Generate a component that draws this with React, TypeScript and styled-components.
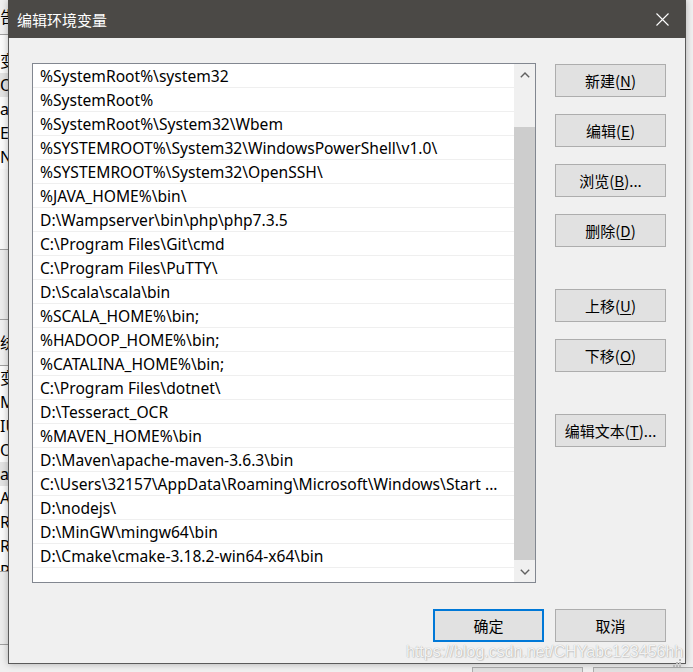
import React from "react";
import styled, { createGlobalStyle } from "styled-components";

const UI_FONT = `"Noto Sans", "Noto Sans CJK SC", sans-serif`;
const CJK_FONT = `"Noto Sans CJK SC", "Noto Sans", sans-serif`;

const GlobalStyle = createGlobalStyle`
  html, body { margin: 0; padding: 0; }
  body {
    background: #f0f0f0;
    font-family: ${UI_FONT};
    overflow: hidden;
  }
`;

/* ---------- desktop & background window ---------- */

const Desktop = styled.div`
  position: relative;
  width: 693px;
  height: 672px;
  overflow: hidden;
  background: #f0f0f0;
  display: flex;
`;

const BackStrip = styled.div<{ $w: number }>`
  width: ${(p) => p.$w}px;
  flex: none;
  height: 100%;
  display: flex;
  flex-direction: column;
  overflow: hidden;
`;

const BackCenter = styled.div`
  flex: 1;
  display: flex;
  flex-direction: column;
  justify-content: flex-end;
`;

const Seg = styled.div<{ $h?: number; $bg?: string; $line?: boolean; $shift?: number; $lh?: number }>`
  flex: ${(p) => (p.$h ? "none" : "1")};
  height: ${(p) => (p.$h ? `${p.$h}px` : "auto")};
  box-sizing: border-box;
  background: ${(p) => p.$bg ?? "#ffffff"};
  border-bottom: ${(p) => (p.$line ? "1px solid #a0a0a0" : "none")};
  font-family: ${UI_FONT};
  font-size: 16px;
  line-height: ${(p) => p.$lh ?? p.$h ?? 24}px;
  color: #000;
  white-space: nowrap;
  overflow: hidden;
  padding-left: ${(p) => p.$shift ?? 0}px;
`;

const BackButtons = styled.div`
  height: 5px;
  display: flex;
  gap: 10px;
  padding-left: 464px;
`;

const BackButton = styled.div<{ $w: number }>`
  width: ${(p) => p.$w}px;
  height: 8px;
  box-sizing: border-box;
  border: 1px solid #adadad;
  background: #e1e1e1;
`;

/* ---------- dialog ---------- */

const Dialog = styled.div`
  position: absolute;
  left: 8px;
  top: 0;
  width: 678px;
  height: 664px;
  box-sizing: border-box;
  border: 1px solid #5a5a5a;
  border-top: none;
  background: #f0f0f0;
  display: flex;
  flex-direction: column;
  box-shadow: 0 0 7px rgba(0, 0, 0, 0.28);
`;

const TitleBar = styled.div`
  height: 38px;
  flex: none;
  background: #4b4946;
  display: flex;
  align-items: center;
  justify-content: space-between;
  padding-left: 9px;
  margin: 0 -1px;
`;

const Title = styled.div`
  font-family: ${CJK_FONT};
  font-size: 15px;
  color: #ffffff;
  line-height: 38px;
  padding-top: 1px;
`;

const CloseButton = styled.div`
  width: 47px;
  height: 38px;
  display: flex;
  align-items: center;
  justify-content: center;
`;

const Body = styled.div`
  flex: 1;
  display: flex;
  flex-direction: column;
  padding: 25px 19px 21px 23px;
`;

const Main = styled.div`
  display: flex;
  gap: 19px;
`;

const ListBox = styled.div`
  width: 504px;
  height: 520px;
  box-sizing: border-box;
  border: 1px solid #828790;
  background: #ffffff;
  display: flex;
`;

const Rows = styled.div`
  flex: 1;
  display: flex;
  flex-direction: column;
  overflow: hidden;
`;

const Row = styled.div`
  height: 24px;
  flex: none;
  box-sizing: border-box;
  border-bottom: 1px solid #efefef;
  padding: 2px 0 0 7px;
  font-family: ${UI_FONT};
  font-size: 15.6px;
  line-height: 21px;
  color: #000;
  white-space: nowrap;
  overflow: hidden;
`;

const ScrollBar = styled.div`
  width: 21px;
  flex: none;
  background: #f0f0f0;
  display: flex;
  flex-direction: column;
`;

const ScrollArrow = styled.div`
  height: 21px;
  flex: none;
  display: flex;
  align-items: center;
  justify-content: center;
`;

const ScrollTrack = styled.div`
  flex: 1;
  display: flex;
  flex-direction: column;
`;

const Thumb = styled.div<{ $top: number; $h: number }>`
  margin-top: ${(p) => p.$top}px;
  height: ${(p) => p.$h}px;
  background: #cdcdcd;
`;

const ButtonColumn = styled.div`
  padding-top: 1px;
  display: flex;
  flex-direction: column;
  gap: 42px;
`;

const ButtonGroup = styled.div`
  display: flex;
  flex-direction: column;
  gap: 17px;
`;

const Button = styled.div<{ $default?: boolean }>`
  width: 111px;
  height: 33px;
  box-sizing: border-box;
  border: ${(p) => (p.$default ? "2px solid #0078d7" : "1px solid #adadad")};
  background: #e1e1e1;
  display: flex;
  align-items: center;
  justify-content: center;
  font-family: ${CJK_FONT};
  font-size: 15px;
  color: #000;
  white-space: nowrap;

  u {
    text-underline-offset: 2px;
    text-decoration-thickness: 1px;
  }
`;

const Footer = styled.div`
  margin-top: 26px;
  display: flex;
  justify-content: flex-end;
  gap: 11px;
`;

const Grip = styled.div`
  position: absolute;
  right: 3px;
  bottom: 2px;
  width: 10px;
  height: 10px;
`;

const Watermark = styled.div`
  position: absolute;
  left: 406px;
  top: 642px;
  font-family: "Liberation Sans", Arial, sans-serif;
  font-size: 16px;
  line-height: 20px;
  color: rgba(255, 255, 255, 0.9);
  text-shadow: 0 0 1px rgba(0, 0, 0, 0.35), 1px 1px 1px rgba(0, 0, 0, 0.12);
  white-space: nowrap;
  pointer-events: none;
`;

const paths = [
  "%SystemRoot%\\system32",
  "%SystemRoot%",
  "%SystemRoot%\\System32\\Wbem",
  "%SYSTEMROOT%\\System32\\WindowsPowerShell\\v1.0\\",
  "%SYSTEMROOT%\\System32\\OpenSSH\\",
  "%JAVA_HOME%\\bin\\",
  "D:\\Wampserver\\bin\\php\\php7.3.5",
  "C:\\Program Files\\Git\\cmd",
  "C:\\Program Files\\PuTTY\\",
  "D:\\Scala\\scala\\bin",
  "%SCALA_HOME%\\bin;",
  "%HADOOP_HOME%\\bin;",
  "%CATALINA_HOME%\\bin;",
  "C:\\Program Files\\dotnet\\",
  "D:\\Tesseract_OCR",
  "%MAVEN_HOME%\\bin",
  "D:\\Maven\\apache-maven-3.6.3\\bin",
  "C:\\Users\\32157\\AppData\\Roaming\\Microsoft\\Windows\\Start ...",
  "D:\\nodejs\\",
  "D:\\MinGW\\mingw64\\bin",
  "D:\\Cmake\\cmake-3.18.2-win64-x64\\bin",
];

const Chevron = ({ down }: { down?: boolean }) => (
  <svg width="10" height="6" viewBox="0 0 10 6">
    <path
      d={down ? "M0.8 0.8 L5 5 L9.2 0.8" : "M0.8 5.2 L5 1 L9.2 5.2"}
      fill="none"
      stroke="#606060"
      strokeWidth="1.4"
    />
  </svg>
);

const Btn = ({ label, k, suffix, isDefault }: { label: string; k?: string; suffix?: string; isDefault?: boolean }) => (
  <Button $default={isDefault}>
    {label}
    {k && (
      <>
        (<u>{k}</u>){suffix ?? ""}
      </>
    )}
  </Button>
);

export default function App() {
  return (
    <>
      <GlobalStyle />
      <Desktop>
        <BackStrip $w={8}>
          <Seg $h={35} $bg="#f0f0f0" $line $shift={-7} $lh={34}>告</Seg>
          <Seg $h={14} $bg="#fbfbfb" />
          <Seg $h={24} $bg="#fbfbfb" $shift={-7}>变</Seg>
          <Seg $h={24} $bg="#e3e3e3" $shift={-8}>Or</Seg>
          <Seg $h={24} $bg="#fbfbfb" $shift={-1}>a</Seg>
          <Seg $h={24} $bg="#fbfbfb" $shift={0}>E</Seg>
          <Seg $h={24} $bg="#fbfbfb" $shift={0}>N</Seg>
          <Seg $h={81} $bg="#f7f7f7" $line />
          <Seg $h={70} $bg="#ececec" $line />
          <Seg $h={46} $bg="#f0f0f0" $line $shift={-7} $lh={46}>统</Seg>
          <Seg $h={24} $bg="#fbfbfb" $shift={-7}>变</Seg>
          <Seg $h={24} $bg="#fbfbfb" $shift={-2}>MA</Seg>
          <Seg $h={24} $bg="#fbfbfb" $shift={-1}>IU</Seg>
          <Seg $h={24} $bg="#fbfbfb" $shift={-3}>OS</Seg>
          <Seg $h={24} $bg="#e3e3e3" $shift={-1}>a</Seg>
          <Seg $h={24} $bg="#fbfbfb" $shift={-2}>A</Seg>
          <Seg $h={24} $bg="#fbfbfb" $shift={0}>R</Seg>
          <Seg $h={24} $bg="#fbfbfb" $shift={0}>R</Seg>
          <Seg $h={14} $bg="#fbfbfb" $line $shift={0} $lh={26}>P</Seg>
          <Seg $h={73} $bg="#ececec" $line />
          <Seg $bg="#f0f0f0" />
        </BackStrip>
        <BackCenter>
          <BackButtons>
            <BackButton $w={111} />
            <BackButton $w={111} />
          </BackButtons>
        </BackCenter>
        <BackStrip $w={7}>
          <Seg $h={45} $bg="#f0f0f0" $line />
          <Seg $h={206} $bg="#f7f7f7" $line />
          <Seg $h={20} $bg="#f0f0f0" $line />
          <Seg $h={32} $bg="#dadada" $line />
          <Seg $h={64} $bg="#f0f0f0" $line />
          <Seg $h={207} $bg="#f7f7f7" $line />
          <Seg $h={20} $bg="#f0f0f0" $line />
          <Seg $h={33} $bg="#dadada" $line />
          <Seg $bg="#f0f0f0" />
        </BackStrip>

        <Dialog>
          <TitleBar>
            <Title>编辑环境变量</Title>
            <CloseButton>
              <svg width="13" height="13" viewBox="0 0 13 13">
                <path d="M0.5 0.5 L12.5 12.5 M12.5 0.5 L0.5 12.5" stroke="#ffffff" strokeWidth="1.1" />
              </svg>
            </CloseButton>
          </TitleBar>
          <Body>
            <Main>
              <ListBox>
                <Rows>
                  {paths.map((p) => (
                    <Row key={p}>{p}</Row>
                  ))}
                </Rows>
                <ScrollBar>
                  <ScrollArrow>
                    <Chevron />
                  </ScrollArrow>
                  <ScrollTrack>
                    <Thumb $top={42} $h={433} />
                  </ScrollTrack>
                  <ScrollArrow>
                    <Chevron down />
                  </ScrollArrow>
                </ScrollBar>
              </ListBox>
              <ButtonColumn>
                <ButtonGroup>
                  <Btn label="新建" k="N" />
                  <Btn label="编辑" k="E" />
                  <Btn label="浏览" k="B" suffix="..." />
                  <Btn label="删除" k="D" />
                </ButtonGroup>
                <ButtonGroup>
                  <Btn label="上移" k="U" />
                  <Btn label="下移" k="O" />
                </ButtonGroup>
                <ButtonGroup>
                  <Btn label="编辑文本" k="T" suffix="..." />
                </ButtonGroup>
              </ButtonColumn>
            </Main>
            <Footer>
              <Btn label="确定" isDefault />
              <Btn label="取消" />
            </Footer>
          </Body>
          <Grip>
            <svg width="10" height="10" viewBox="0 0 10 10">
              {[
                [7, 1],
                [4, 4],
                [7, 4],
                [1, 7],
                [4, 7],
                [7, 7],
              ].map(([x, y]) => (
                <rect key={`${x}-${y}`} x={x} y={y} width="2" height="2" fill="#b8b8b8" />
              ))}
            </svg>
          </Grip>
        </Dialog>
        <Watermark>https://blog.csdn.net/CHYabc123456hh</Watermark>
      </Desktop>
    </>
  );
}
